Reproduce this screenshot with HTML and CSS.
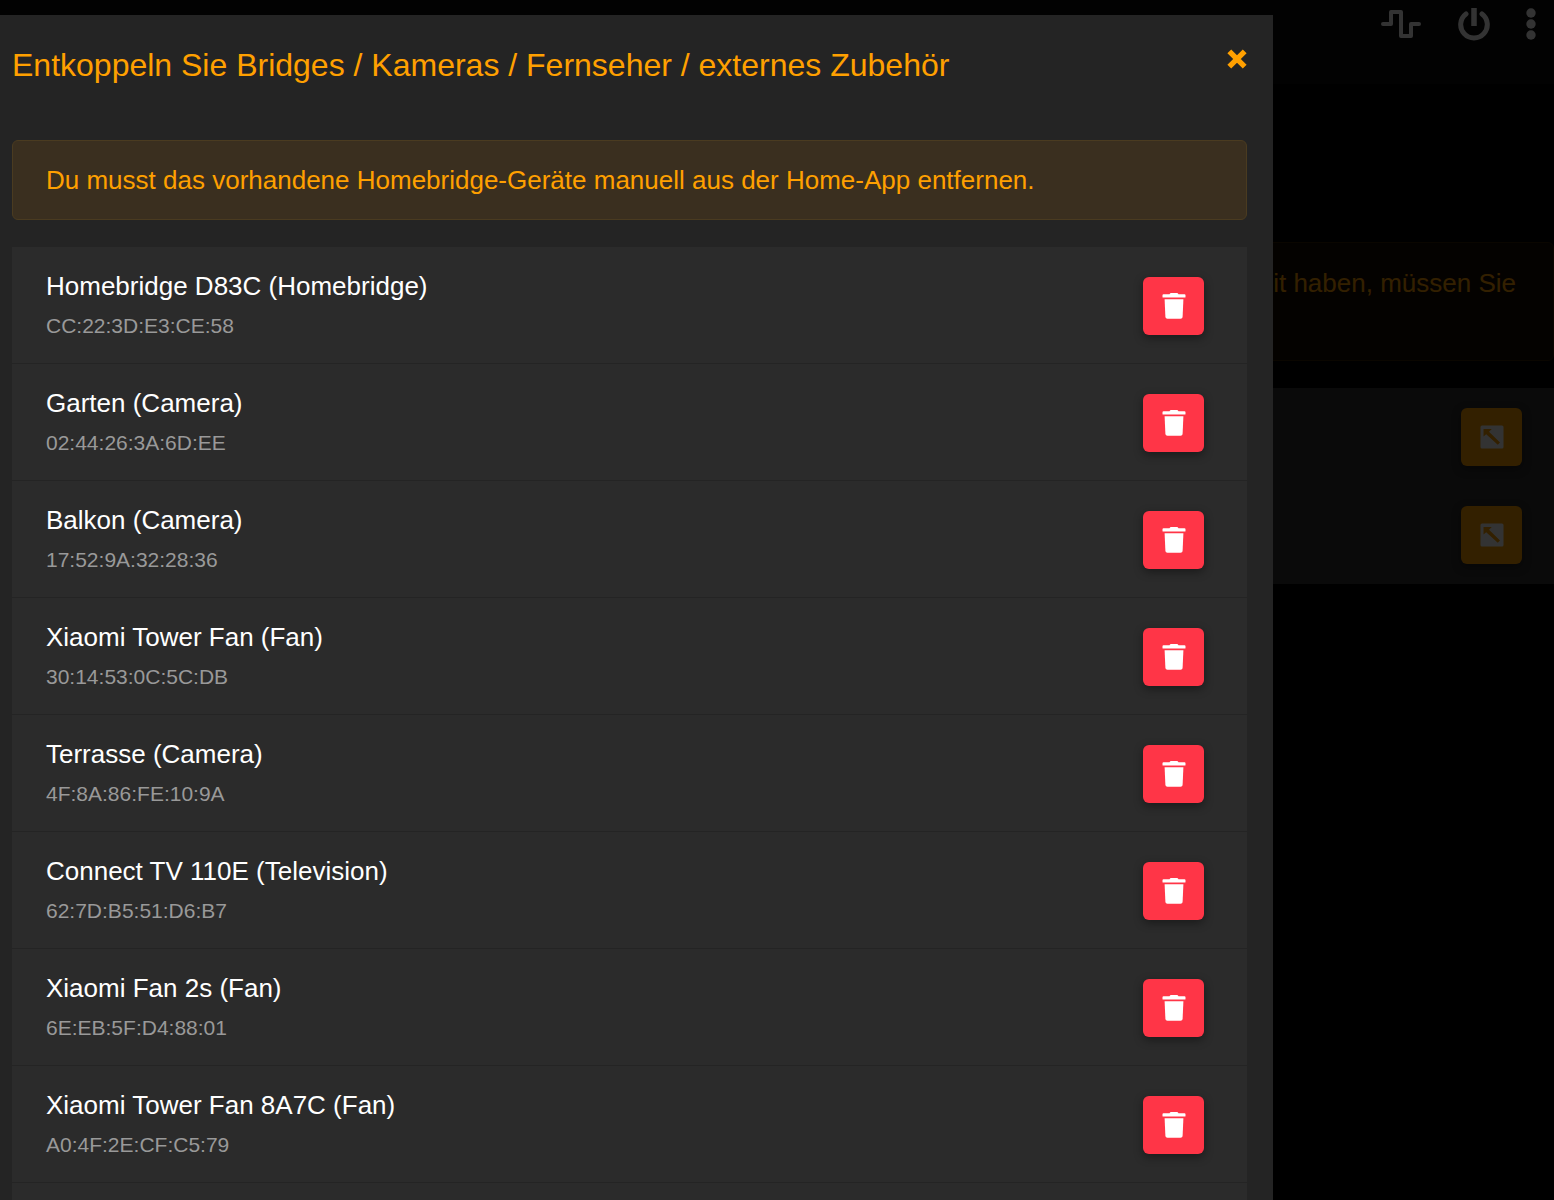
FILE: index.html
```html
<!DOCTYPE html>
<html lang="de">
<head>
    <meta charset="utf-8">
    <title>Homebridge</title>
    <link rel="stylesheet" href="styles.css">
</head>
<body>
    <svg class="sprite" aria-hidden="true">
        <symbol id="trash" viewBox="0 0 24 28">
            <path d="M1.5 2.3H7.5Q8.2 1 9 1H15Q15.800 1 16.500 2.300H22.500Q23.500 2.300 23.500 3.300V5Q23.500 5.600 22.900 5.600H1.100Q.5 5.600.5 5V3.300Q.5 2.300 1.500 2.300Z"/>
            <path d="M2.600 7.200H21.400L20.600 25Q20.400 26.800 18.600 26.800H5.400Q3.600 26.800 3.400 25Z"/>
        </symbol>
        <symbol id="arrow-box" viewBox="0 0 24 24">
            <path fill-rule="evenodd" d="M2 .5H22Q23.5 .5 23.5 2V22Q23.5 23.5 22 23.5H2Q.5 23.5 .5 22V2Q.5 .5 2 .5ZM3.500 4V11.500L6.200 9.200 17.800 19.800 20 17.600 9 6.800 11.800 4Z"/>
        </symbol>
    </svg>

    <header class="topbar">
        <button class="topbar-btn" aria-label="Status">
            <svg width="42" height="34" viewBox="0 0 42 34" fill="none" stroke="currentColor" stroke-width="4" stroke-linecap="round" stroke-linejoin="round"><path d="M3 17H11V5H21V29H31V17H39"/></svg>
        </button>
        <button class="topbar-btn" aria-label="Neustart">
            <svg width="32" height="34" viewBox="0 0 32 34" fill="none" stroke="currentColor" stroke-linecap="round"><path stroke-width="5" d="M8 7A13.300 13.300 0 1 0 24 7"/><path stroke-width="5.500" stroke-linecap="butt" d="M16 1V19"/></svg>
        </button>
        <button class="topbar-btn" aria-label="Menü">
            <svg width="10" height="34" viewBox="0 0 10 34" fill="currentColor"><circle cx="5" cy="6" r="4.700"/><circle cx="5" cy="17" r="4.700"/><circle cx="5" cy="28" r="4.700"/></svg>
        </button>
    </header>

    <main class="page">
        <div class="alert page-alert">Kit haben, müssen Sie</div>
        <ul class="list page-list">
            <li><button class="btn btn-primary" aria-label="Öffnen"><svg class="icon-arrow"><use href="#arrow-box"/></svg></button></li>
            <li><button class="btn btn-primary" aria-label="Öffnen"><svg class="icon-arrow"><use href="#arrow-box"/></svg></button></li>
        </ul>
    </main>

    <div class="backdrop">
        <div class="modal" role="dialog" aria-labelledby="modal-title">
            <div class="modal-header">
                <h1 id="modal-title">Entkoppeln Sie Bridges / Kameras / Fernseher / externes Zubehör</h1>
                <button class="close" aria-label="Schließen">
                    <svg width="20" height="20" viewBox="0 0 20 20" fill="none" stroke="currentColor" stroke-width="5.400"><path d="M2.300 2.300 17.700 17.700M17.700 2.300 2.300 17.700"/></svg>
                </button>
            </div>
            <div class="alert">Du musst das vorhandene Homebridge-Geräte manuell aus der Home-App entfernen.</div>
            <ul class="list">
                <li class="device">
                    <div>
                        <div class="name">Homebridge D83C (Homebridge)</div>
                        <div class="mac">CC:22:3D:E3:CE:58</div>
                    </div>
                    <button class="btn btn-danger" aria-label="Löschen"><svg class="icon-trash"><use href="#trash"/></svg></button>
                </li>
                <li class="device">
                    <div>
                        <div class="name">Garten (Camera)</div>
                        <div class="mac">02:44:26:3A:6D:EE</div>
                    </div>
                    <button class="btn btn-danger" aria-label="Löschen"><svg class="icon-trash"><use href="#trash"/></svg></button>
                </li>
                <li class="device">
                    <div>
                        <div class="name">Balkon (Camera)</div>
                        <div class="mac">17:52:9A:32:28:36</div>
                    </div>
                    <button class="btn btn-danger" aria-label="Löschen"><svg class="icon-trash"><use href="#trash"/></svg></button>
                </li>
                <li class="device">
                    <div>
                        <div class="name">Xiaomi Tower Fan (Fan)</div>
                        <div class="mac">30:14:53:0C:5C:DB</div>
                    </div>
                    <button class="btn btn-danger" aria-label="Löschen"><svg class="icon-trash"><use href="#trash"/></svg></button>
                </li>
                <li class="device">
                    <div>
                        <div class="name">Terrasse (Camera)</div>
                        <div class="mac">4F:8A:86:FE:10:9A</div>
                    </div>
                    <button class="btn btn-danger" aria-label="Löschen"><svg class="icon-trash"><use href="#trash"/></svg></button>
                </li>
                <li class="device">
                    <div>
                        <div class="name">Connect TV 110E (Television)</div>
                        <div class="mac">62:7D:B5:51:D6:B7</div>
                    </div>
                    <button class="btn btn-danger" aria-label="Löschen"><svg class="icon-trash"><use href="#trash"/></svg></button>
                </li>
                <li class="device">
                    <div>
                        <div class="name">Xiaomi Fan 2s (Fan)</div>
                        <div class="mac">6E:EB:5F:D4:88:01</div>
                    </div>
                    <button class="btn btn-danger" aria-label="Löschen"><svg class="icon-trash"><use href="#trash"/></svg></button>
                </li>
                <li class="device">
                    <div>
                        <div class="name">Xiaomi Tower Fan 8A7C (Fan)</div>
                        <div class="mac">A0:4F:2E:CF:C5:79</div>
                    </div>
                    <button class="btn btn-danger" aria-label="Löschen"><svg class="icon-trash"><use href="#trash"/></svg></button>
                </li>
                <li class="device"></li>
            </ul>
        </div>
    </div>
</body>
</html>
```

FILE: styles.css
```css
* {
    box-sizing: border-box;
}

body {
    margin: 0;
    background-color: #000;
    color: #fff;
    font-family: "Liberation Sans", Arial, sans-serif;
    font-size: 26px;
    line-height: 40px;
}

button {
    padding: 0;
    border: none;
    background: none;
    color: inherit;
    cursor: pointer;
}

svg {
    display: block;
}

.sprite {
    display: none;
}

.topbar {
    display: flex;
    justify-content: flex-end;
    align-items: flex-start;
    gap: 36px;
    height: 84px;
    padding: 7px 18px;
    background-color: #0d0d0d;
}

.topbar-btn {
    display: flex;
    align-items: center;
    height: 34px;
}

.page {
    padding-top: 158px;
}

.alert {
    padding: 19px 33px;
    border: 1px solid #4a3b20;
    border-radius: 6px;
    background-color: #3a2f1f;
    color: #ffa000;
}

.page-alert {
    min-height: 119px;
    padding: 20px 37px;
    border-color: #331f00;
    background-color: #140c00;
    text-align: right;
}

.list {
    margin: 27px 0 0;
    padding: 0;
    list-style: none;
    background-color: #2b2b2b;
}

.page-list {
    background-color: #323232;
}

.page-list li {
    display: flex;
    justify-content: flex-end;
    padding: 20px 32px;
}

.btn {
    display: flex;
    justify-content: center;
    align-items: center;
    flex: none;
    width: 61px;
    height: 58px;
    border-radius: 6px;
    box-shadow: 0 3px 10px rgba(0, 0, 0, 0.4);
}

.btn-primary {
    background-color: #ffa000;
}

.btn-danger {
    background-color: #ff3547;
}

.icon-arrow {
    width: 24px;
    height: 24px;
    fill: currentColor;
}

.icon-trash {
    width: 24px;
    height: 28px;
    fill: currentColor;
}

.backdrop {
    position: fixed;
    inset: 0;
    padding: 15px 281px 0 0;
    background-color: rgba(0, 0, 0, 0.8);
    overflow: hidden;
}

.modal {
    min-height: 100%;
    padding: 0 26px 0 12px;
    background-color: #242424;
}

.modal-header {
    display: flex;
    justify-content: space-between;
    align-items: flex-start;
    padding-top: 30px;
    margin-bottom: 55px;
}

.modal-header h1 {
    margin: 0;
    color: #ffa000;
    font-size: 32px;
    font-weight: normal;
    line-height: 40px;
}

.close {
    padding-top: 4px;
    color: #ffa000;
}

.device {
    display: flex;
    justify-content: space-between;
    align-items: center;
    min-height: 117px;
    padding: 19px 43px 17px 34px;
    border-bottom: 1px solid #242424;
}

.mac {
    color: #999;
    font-size: 21px;
}
```
